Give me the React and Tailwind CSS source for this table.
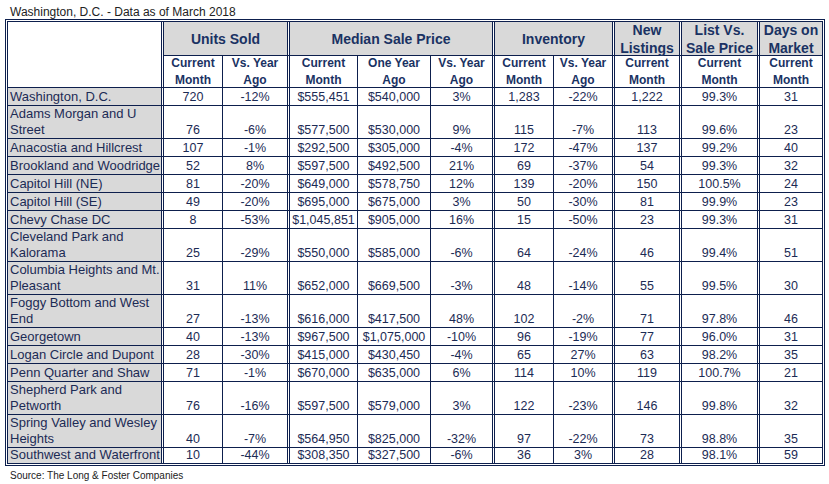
import React from "react";

const rows = [
  ["Washington, D.C.", "720", "-12%", "$555,451", "$540,000", "3%", "1,283", "-22%", "1,222", "99.3%", "31"],
  [["Adams Morgan and U", "Street"], "76", "-6%", "$577,500", "$530,000", "9%", "115", "-7%", "113", "99.6%", "23"],
  ["Anacostia and Hillcrest", "107", "-1%", "$292,500", "$305,000", "-4%", "172", "-47%", "137", "99.2%", "40"],
  ["Brookland and Woodridge", "52", "8%", "$597,500", "$492,500", "21%", "69", "-37%", "54", "99.3%", "32"],
  ["Capitol Hill (NE)", "81", "-20%", "$649,000", "$578,750", "12%", "139", "-20%", "150", "100.5%", "24"],
  ["Capitol Hill (SE)", "49", "-20%", "$695,000", "$675,000", "3%", "50", "-30%", "81", "99.9%", "23"],
  ["Chevy Chase DC", "8", "-53%", "$1,045,851", "$905,000", "16%", "15", "-50%", "23", "99.3%", "31"],
  [["Cleveland Park and", "Kalorama"], "25", "-29%", "$550,000", "$585,000", "-6%", "64", "-24%", "46", "99.4%", "51"],
  [["Columbia Heights and Mt.", "Pleasant"], "31", "11%", "$652,000", "$669,500", "-3%", "48", "-14%", "55", "99.5%", "30"],
  [["Foggy Bottom and West", "End"], "27", "-13%", "$616,000", "$417,500", "48%", "102", "-2%", "71", "97.8%", "46"],
  ["Georgetown", "40", "-13%", "$967,500", "$1,075,000", "-10%", "96", "-19%", "77", "96.0%", "31"],
  ["Logan Circle and Dupont", "28", "-30%", "$415,000", "$430,450", "-4%", "65", "27%", "63", "98.2%", "35"],
  ["Penn Quarter and Shaw", "71", "-1%", "$670,000", "$635,000", "6%", "114", "10%", "119", "100.7%", "21"],
  [["Shepherd Park and", "Petworth"], "76", "-16%", "$597,500", "$579,000", "3%", "122", "-23%", "146", "99.8%", "32"],
  [["Spring Valley and Wesley", "Heights"], "40", "-7%", "$564,950", "$825,000", "-32%", "97", "-22%", "73", "98.8%", "35"],
  ["Southwest and Waterfront", "10", "-44%", "$308,350", "$327,500", "-6%", "36", "3%", "28", "98.1%", "59"],
];

const rightB = [
  "border-r-[3px]",
  "border-r",
  "border-r-[3px]",
  "border-r",
  "border-r",
  "border-r-[3px]",
  "border-r",
  "border-r-[3px]",
  "border-r-[3px]",
  "border-r-[3px]",
  "",
];

const base = "border-double border-[#0d1f4d]";

function GroupHead({ children, right }) {
  return (
    <div
      className={`${base} ${right} border-b bg-[#d9d9d9] bg-clip-padding flex items-center justify-center text-center text-[14px] leading-[18px] font-bold text-[#1a3263]`}
    >
      <div>{children}</div>
    </div>
  );
}

function SubHead({ children, right }) {
  return (
    <div
      className={`${base} ${right} border-b bg-white flex items-center justify-center text-center text-[12px] leading-[17px] font-bold text-[#1a3263]`}
    >
      <div>{children}</div>
    </div>
  );
}

export default function App() {
  return (
    <div className="w-[829px] h-[484px] bg-white font-['Liberation_Sans',Arial,sans-serif] overflow-hidden">
      <div className="pl-[10px] pt-[5px] text-[12px] leading-[14px] text-[#222]">
        Washington, D.C. - Data as of March 2018
      </div>
      <div className="ml-[5px] w-[820px] border-[3px] border-double border-[#0d1f4d] grid grid-cols-[156px_59px_67px_68px_73px_64px_59px_61px_67px_78px_62px] grid-rows-[34px_32px_18px_33px_18px_18px_18px_18px_18px_33px_33px_33px_18px_18px_18px_33px_33px_15px]">
        <div className={`${base} border-r-[3px] border-b row-span-2 bg-white`} />
        <div className="col-span-2 grid">
          <GroupHead right="border-r-[3px]">Units Sold</GroupHead>
        </div>
        <div className="col-span-3 grid">
          <GroupHead right="border-r-[3px]">Median Sale Price</GroupHead>
        </div>
        <div className="col-span-2 grid">
          <GroupHead right="border-r-[3px]">Inventory</GroupHead>
        </div>
        <GroupHead right="border-r-[3px]">
          New
          <br />
          Listings
        </GroupHead>
        <GroupHead right="border-r-[3px]">
          List Vs.
          <br />
          Sale Price
        </GroupHead>
        <GroupHead right="">
          Days on
          <br />
          Market
        </GroupHead>

        <SubHead right="border-r">Current<br />Month</SubHead>
        <SubHead right="border-r-[3px]">Vs. Year<br />Ago</SubHead>
        <SubHead right="border-r">Current<br />Month</SubHead>
        <SubHead right="border-r">One Year<br />Ago</SubHead>
        <SubHead right="border-r-[3px]">Vs. Year<br />Ago</SubHead>
        <SubHead right="border-r">Current<br />Month</SubHead>
        <SubHead right="border-r-[3px]">Vs. Year<br />Ago</SubHead>
        <SubHead right="border-r-[3px]">Current<br />Month</SubHead>
        <SubHead right="border-r-[3px]">Current<br />Month</SubHead>
        <SubHead right="">Current<br />Month</SubHead>

        {rows.map((row, ri) => {
          const last = ri === rows.length - 1;
          const bottom = last ? "" : "border-b";
          return row.map((cell, ci) => {
            if (ci === 0) {
              const lines = Array.isArray(cell) ? cell : [cell];
              return (
                <div
                  key={`${ri}-${ci}`}
                  className={`${base} ${rightB[ci]} ${bottom} bg-[#d9d9d9] bg-clip-padding flex flex-col justify-end pl-[2px] text-[13px] leading-[16px] text-[#1c2b55] whitespace-nowrap overflow-hidden`}
                >
                  {lines.map((l, li) => (
                    <div key={li} className="leading-[16px]">
                      {l}
                    </div>
                  ))}
                </div>
              );
            }
            return (
              <div
                key={`${ri}-${ci}`}
                className={`${base} ${rightB[ci]} ${bottom} bg-white flex items-end justify-center text-[12.5px] leading-[16px] text-[#1c2b55] whitespace-nowrap`}
              >
                {cell}
              </div>
            );
          });
        })}
      </div>
      <div className="pl-[10px] mt-[4px] text-[10px] leading-[12px] text-[#222]">
        Source: The Long &amp; Foster Companies
      </div>
    </div>
  );
}
